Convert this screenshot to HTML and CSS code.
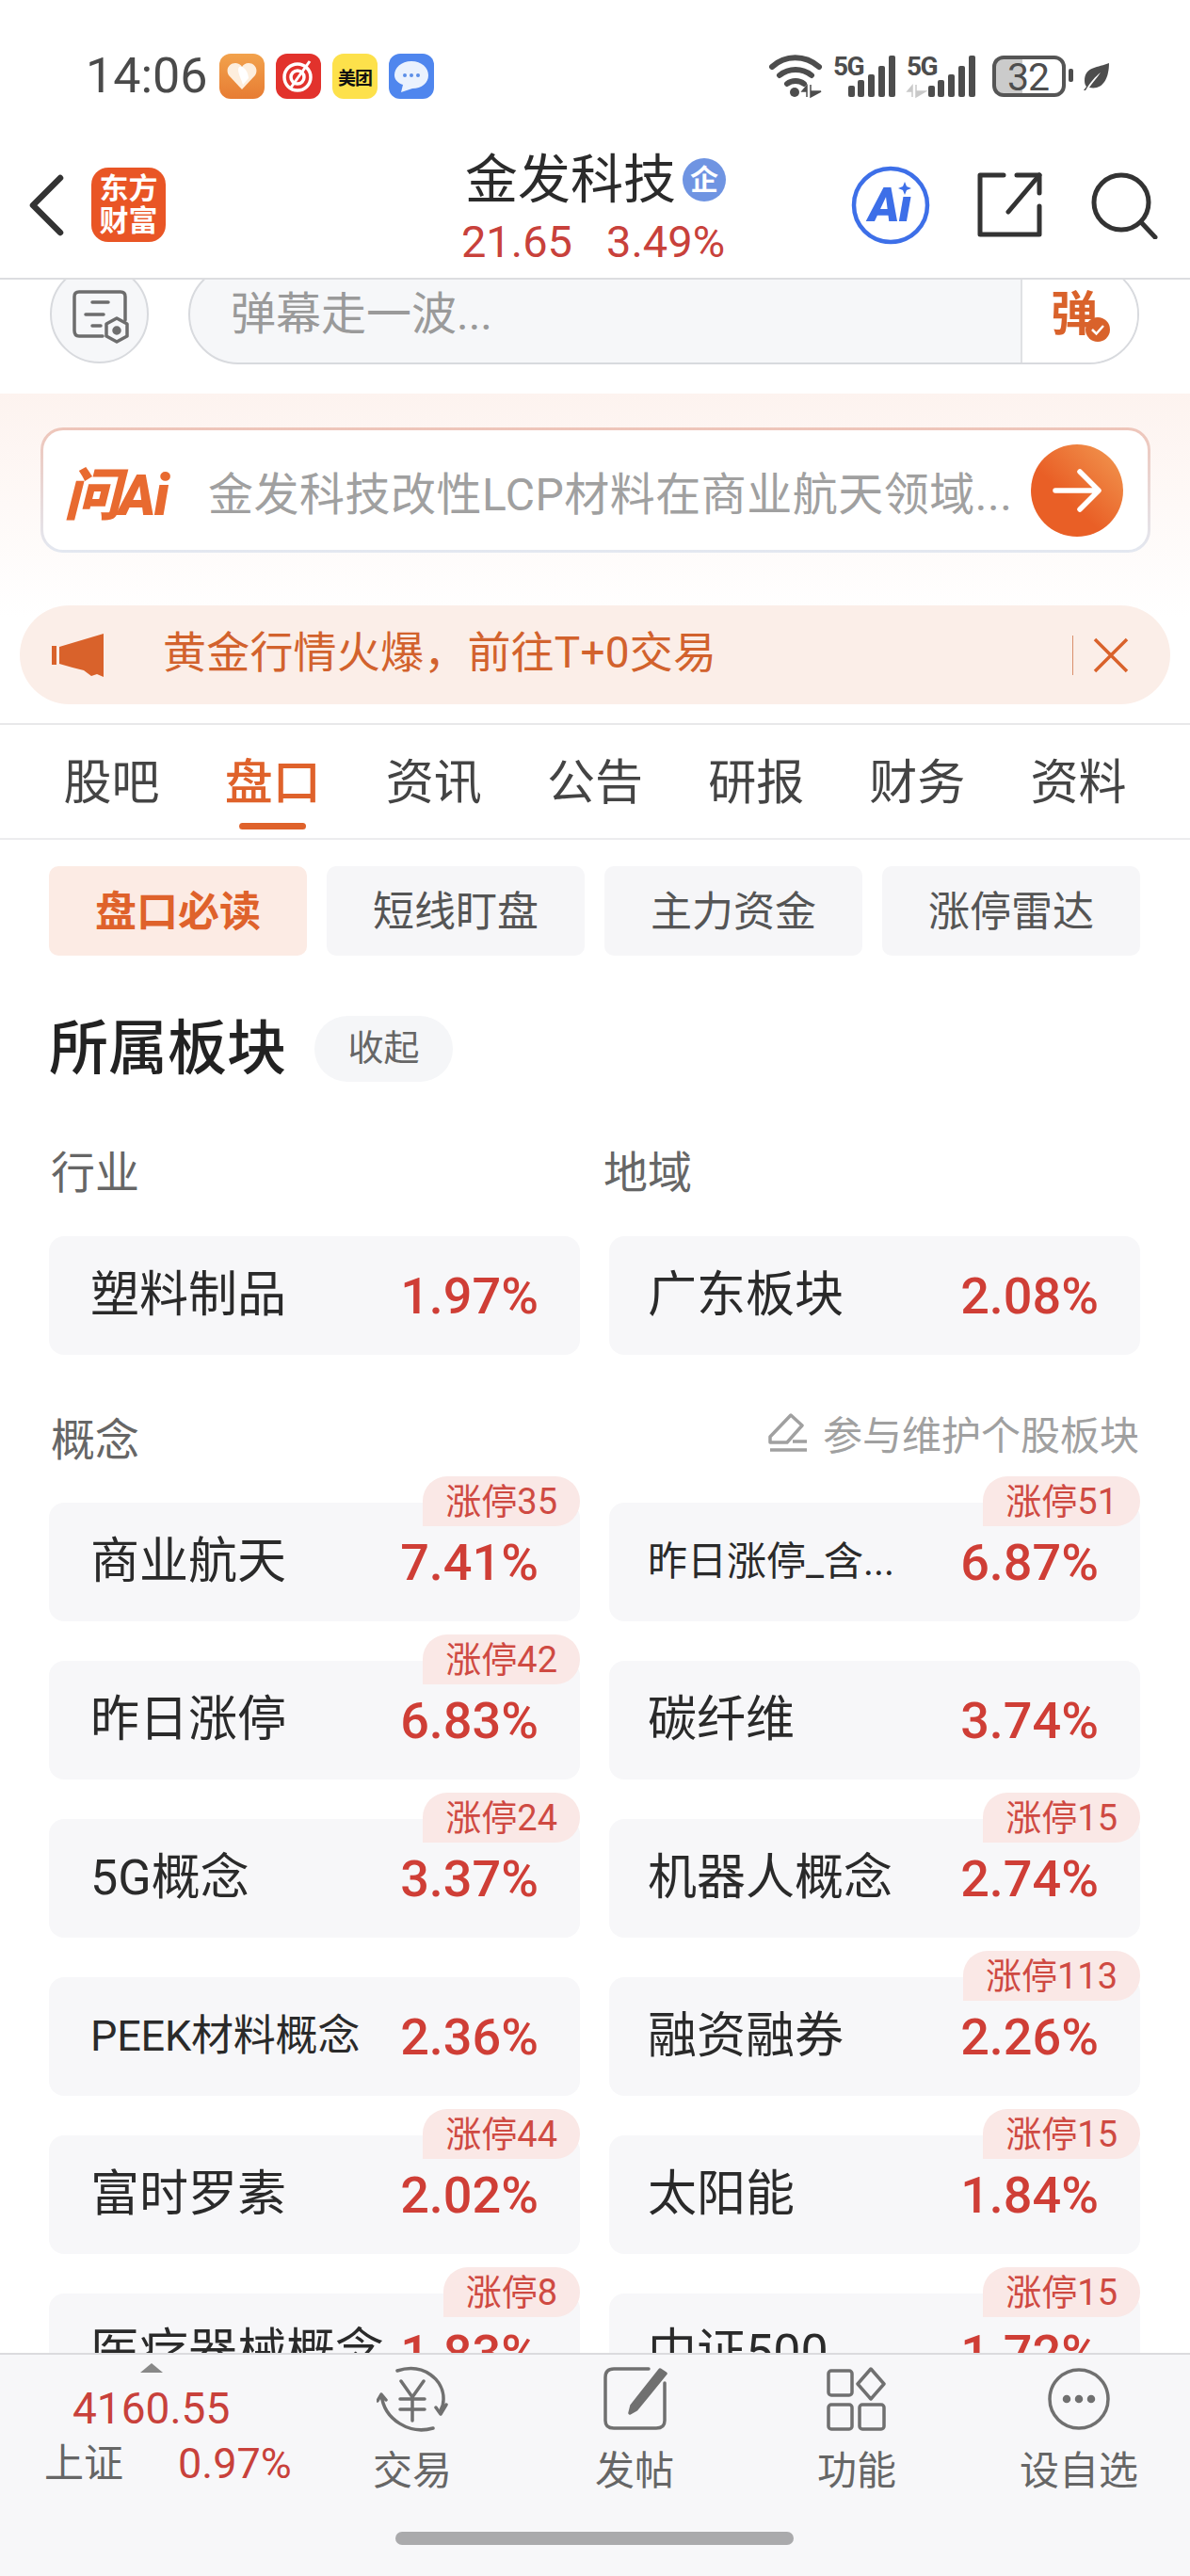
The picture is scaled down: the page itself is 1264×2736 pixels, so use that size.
FILE: index.html
```html
<!DOCTYPE html>
<html lang="zh-CN">
<head>
  <meta charset="UTF-8">
  <meta name="viewport" content="width=device-width, initial-scale=1.0">
  <title>金发科技 盘口</title>
  <link rel="stylesheet" href="styles.css">
</head>
<body>
  <div class="status-bar">
    <div class="status-left">
      <span class="clock">14:06</span>
      <span class="app-icon app-health">
        <svg viewBox="0 0 48 48" width="48" height="48"><path d="M24 38 L10 23 C6 16 11 10 17 10 C20 10 23 12 24 14 C25 12 28 10 31 10 C37 10 42 16 38 23 Z" fill="#fdeedd"/><path d="M21 14 C26 12 31 20 31 26 L25 33 C23 26 18 18 21 14 Z" fill="#fff"/></svg>
      </span>
      <span class="app-icon app-red">
        <svg viewBox="0 0 48 48" width="48" height="48" fill="none" stroke="#fff" stroke-width="3.5"><circle cx="23" cy="25" r="14"/><circle cx="23" cy="25" r="7"/><path d="M36 8 L16 36" stroke-width="3"/></svg>
      </span>
      <span class="app-icon app-meituan">美团</span>
      <span class="app-icon app-msg">
        <svg viewBox="0 0 48 48" width="48" height="48"><path d="M24 8 C35 8 42 15 42 23 C42 31 35 37 25 37 L13 41 L15 33 C9 31 6 27 6 23 C6 15 13 8 24 8 Z" fill="#eaf2fe"/><circle cx="17" cy="23" r="2" fill="#5b8fe8"/><circle cx="24" cy="23" r="2" fill="#5b8fe8"/><circle cx="31" cy="23" r="2" fill="#5b8fe8"/></svg>
      </span>
    </div>
    <svg class="status-right" viewBox="818 36 362 80" width="362" height="80">
      <g fill="none" stroke="#4d4d4d" stroke-width="6" stroke-linecap="round">
        <path d="M821 71 C835 58 856 58 871 71"/>
        <path d="M829 80 C839 72 853 72 863 80"/>
        <path d="M837 89 C842 85 850 85 855 89"/>
      </g>
      <circle cx="845" cy="98" r="5" fill="#4d4d4d"/>
      <path d="M858 103 V91 L853 97 H858 M862 90 V103 L873 97 H862" fill="#4d4d4d" stroke="#4d4d4d" stroke-width="1.5"/>
      <text x="886" y="80" class="sig-text">5G</text>
      <g fill="#4d4d4d">
        <rect x="902" y="91" width="7" height="12" rx="2"/>
        <rect x="912" y="85" width="7" height="18" rx="2"/>
        <rect x="923" y="79" width="7" height="24" rx="2"/>
        <rect x="934" y="70" width="7" height="33" rx="2"/>
        <rect x="945" y="59" width="7" height="44" rx="2"/>
      </g>
      <text x="964" y="80" class="sig-text">5G</text>
      <path d="M970 103 V91 L965 97 H970 M974 90 V103 L984 97 H974" fill="#c9c9c9" stroke="#c9c9c9" stroke-width="1.5"/>
      <g fill="#4d4d4d">
        <rect x="987" y="91" width="7" height="12" rx="2"/>
        <rect x="997" y="85" width="7" height="18" rx="2"/>
        <rect x="1008" y="79" width="7" height="24" rx="2"/>
        <rect x="1019" y="70" width="7" height="33" rx="2"/>
        <rect x="1030" y="59" width="7" height="44" rx="2"/>
      </g>
      <path d="M1060 62 H1087 V100 H1060 Q1057 100 1057 97 V65 Q1057 62 1060 62 Z" fill="#cbcbcb"/>
      <rect x="1057" y="61" width="74" height="40" rx="10" fill="none" stroke="#555" stroke-width="4"/>
      <text x="1093" y="96" class="batt-text" text-anchor="middle">32</text>
      <rect x="1136" y="73" width="5" height="14" rx="2" fill="#4d4d4d"/>
      <path d="M1179 67 C1168 72 1153 70 1153 86 C1153 89 1154 91 1155 92 L1152 96 L1154 96 C1160 86 1164 82 1170 77 C1166 83 1162 87 1158 93 C1172 96 1179 84 1179 67 Z" fill="#4d4d4d"/>
    </svg>
  </div>

  <header class="top-nav">
    <div class="nav-left">
      <svg viewBox="0 0 40 66" width="40" height="66" fill="none" stroke="#333" stroke-width="6.5" stroke-linecap="round" stroke-linejoin="round"><path d="M34 4 L5 33 L34 62"/></svg>
      <div class="logo">东方<br>财富</div>
    </div>
    <div class="nav-title">
      <div class="stock-name">金发科技<span class="qi">企</span></div>
      <div class="stock-price"><span>21.65</span><span>3.49%</span></div>
    </div>
    <div class="nav-right">
      <svg viewBox="0 0 84 84" width="84" height="84"><circle cx="42" cy="42" r="39" fill="none" stroke="#3d6fe8" stroke-width="4.5"/><text x="41" y="59" class="ai-text" text-anchor="middle">Aı</text><path d="M57 17 L59 22 L64 24 L59 26 L57 31 L55 26 L50 24 L55 22 Z" fill="#3d6fe8"/></svg>
      <svg viewBox="0 0 70 70" width="70" height="70" fill="none" stroke="#333" stroke-width="5" stroke-linecap="round" stroke-linejoin="round"><path d="M28 3 H3 V66 H66 V36"/><path d="M66 3 H42 M66 3 V22"/><path d="M66 3 L33 42"/></svg>
      <svg viewBox="0 0 72 72" width="72" height="72" fill="none" stroke="#333" stroke-width="5" stroke-linecap="round"><circle cx="33" cy="33" r="29"/><path d="M54 54 L69 70"/></svg>
    </div>
  </header>

  <main class="content">
    <div class="danmu-row">
      <div class="danmu-setting">
        <svg viewBox="0 0 66 60" width="66" height="60" fill="none" stroke="#6d6d6d" stroke-width="3.5" stroke-linecap="round" stroke-linejoin="round"><path d="M57 33 V8 Q57 3 52 3 H8 Q3 3 3 8 V44 Q3 50 8 50 H33"/><path d="M22 14 H39 M15 27 H34 M22 39 H31"/><path d="M48 31 L59 37 V50 L48 56 L37 50 V37 Z"/><circle cx="48" cy="44" r="3" fill="#6d6d6d"/></svg>
      </div>
      <div class="danmu-input">
        <span class="danmu-hint">弹幕走一波...</span>
        <span class="danmu-send">弹
          <svg class="danmu-check" viewBox="0 0 28 28" width="28" height="28"><circle cx="14" cy="14" r="13" fill="#d9622b"/><path d="M8 14 L12.500 18.500 L20 10" fill="none" stroke="#fff" stroke-width="2.500"/></svg>
        </span>
      </div>
    </div>

    <section class="promo">
      <div class="ask-card">
        <span class="ask-logo">问Ai</span>
        <span class="ask-text">金发科技改性LCP材料在商业航天领域...</span>
        <span class="ask-go">
          <svg viewBox="0 0 98 98" width="98" height="98" fill="none" stroke="#fff" stroke-width="5.5" stroke-linecap="round" stroke-linejoin="round"><path d="M26 49 H70 M52 29 L72 49 L52 69"/></svg>
        </span>
      </div>
      <div class="notice">
        <svg viewBox="0 0 56 46" width="56" height="46" fill="#d9622b"><rect x="0" y="13" width="5" height="20"/><path d="M8 14 L55 0 V46 L48 43 L42 45 L34 39 L22 36 L8 32 Z"/></svg>
        <span class="notice-text">黄金行情火爆，前往T+0交易</span>
        <span class="notice-sep"></span>
        <svg viewBox="0 0 38 38" width="38" height="38" fill="none" stroke="#d9622b" stroke-width="3.500"><path d="M2 2 L36 36 M36 2 L2 36"/></svg>
      </div>
    </section>

    <nav class="tabs">
      <div class="tab">股吧</div>
      <div class="tab active">盘口</div>
      <div class="tab">资讯</div>
      <div class="tab">公告</div>
      <div class="tab">研报</div>
      <div class="tab">财务</div>
      <div class="tab">资料</div>
    </nav>

    <div class="sub-tabs">
      <div class="sub-tab active">盘口必读</div>
      <div class="sub-tab">短线盯盘</div>
      <div class="sub-tab">主力资金</div>
      <div class="sub-tab">涨停雷达</div>
    </div>

    <div class="section-head">
      <h2>所属板块</h2>
      <span class="collapse">收起</span>
    </div>

    <div class="label-row">
      <span class="label">行业</span>
      <span class="label label-region">地域</span>
    </div>
    <div class="board-grid">
      <div class="board"><span class="board-name">塑料制品</span><span class="board-pct">1.97%</span></div>
      <div class="board"><span class="board-name">广东板块</span><span class="board-pct">2.08%</span></div>
    </div>

    <div class="label-row concept-head">
      <span class="label">概念</span>
      <span class="maintain">
        <svg viewBox="0 0 42 42" width="42" height="42" fill="none" stroke="#a0a0a0" stroke-width="3.500" stroke-linejoin="round"><path d="M2 26 L24 3 L36 14 L20 32 H2 Z"/><path d="M2 40 H41 M26 31 H41"/></svg>
        参与维护个股板块
      </span>
    </div>
    <div class="board-grid concept-grid">
      <div class="board"><span class="tag">涨停35</span><span class="board-name">商业航天</span><span class="board-pct">7.41%</span></div>
      <div class="board"><span class="tag">涨停51</span><span class="board-name small">昨日涨停_含...</span><span class="board-pct">6.87%</span></div>
      <div class="board"><span class="tag">涨停42</span><span class="board-name">昨日涨停</span><span class="board-pct">6.83%</span></div>
      <div class="board"><span class="board-name">碳纤维</span><span class="board-pct">3.74%</span></div>
      <div class="board"><span class="tag">涨停24</span><span class="board-name">5G概念</span><span class="board-pct">3.37%</span></div>
      <div class="board"><span class="tag">涨停15</span><span class="board-name">机器人概念</span><span class="board-pct">2.74%</span></div>
      <div class="board"><span class="board-name peek">PEEK材料概念</span><span class="board-pct">2.36%</span></div>
      <div class="board"><span class="tag">涨停113</span><span class="board-name">融资融券</span><span class="board-pct">2.26%</span></div>
      <div class="board"><span class="tag">涨停44</span><span class="board-name">富时罗素</span><span class="board-pct">2.02%</span></div>
      <div class="board"><span class="tag">涨停15</span><span class="board-name">太阳能</span><span class="board-pct">1.84%</span></div>
      <div class="board"><span class="tag">涨停8</span><span class="board-name">医疗器械概念</span><span class="board-pct">1.83%</span></div>
      <div class="board"><span class="tag">涨停15</span><span class="board-name">中证500</span><span class="board-pct">1.72%</span></div>
    </div>
  </main>

  <footer class="bottom-bar">
    <div class="bottom-row">
      <div class="index-box">
        <span class="index-arrow"></span>
        <div class="index-value">4160.55</div>
        <div class="index-line"><span class="index-name">上证</span><span class="index-pct">0.97%</span></div>
      </div>
      <div class="bottom-item">
        <svg viewBox="0 0 76 70" width="76" height="70" fill="none" stroke="#707070" stroke-width="3.500" stroke-linecap="round" stroke-linejoin="round"><path d="M22 5 C50 -4 72 15 71 36 C71 40 70 44 68 47"/><path d="M60 66 C36 73 8 58 5 30 L1 37 M5 30 L10 36"/><path d="M74 41 L68 51 L63 44"/><path d="M26 16 L38 33 L50 16 M25 35 H51 M25 46 H51 M38 33 V58"/></svg>
        <span>交易</span>
      </div>
      <div class="bottom-item">
        <svg viewBox="0 0 70 70" width="70" height="70" fill="none" stroke="#707070" stroke-width="3.500" stroke-linecap="round" stroke-linejoin="round"><path d="M50 3 H13 Q4 3 4 12 V58 Q4 66 13 66 H58 Q67 66 67 58 V18"/><path d="M62 4 L68 8 L37 46 L30 50 L32 42 Z" fill="#707070"/></svg>
        <span>发帖</span>
      </div>
      <div class="bottom-item">
        <svg viewBox="0 0 66 70" width="66" height="70" fill="none" stroke="#707070" stroke-width="3.500" stroke-linejoin="round"><rect x="3" y="5" width="25" height="26" rx="3"/><path d="M48 3 L62 19 L48 35 L34 19 Z"/><rect x="3" y="41" width="25" height="26" rx="3"/><rect x="36" y="41" width="26" height="26" rx="3"/></svg>
        <span>功能</span>
      </div>
      <div class="bottom-item">
        <svg viewBox="0 0 70 70" width="70" height="70" fill="none" stroke="#707070" stroke-width="3.500"><circle cx="35" cy="35" r="31"/><circle cx="22" cy="35" r="2.500" fill="#707070"/><circle cx="35" cy="35" r="2.500" fill="#707070"/><circle cx="48" cy="35" r="2.500" fill="#707070"/></svg>
        <span>设自选</span>
      </div>
    </div>
    <div class="home-bar"></div>
  </footer>
</body>
</html>
```

FILE: styles.css
```css
* {
  box-sizing: border-box;
}
html, body {
  margin: 0;
  padding: 0;
}
body {
  width: 1264px;
  height: 2736px;
  display: flex;
  flex-direction: column;
  overflow: hidden;
  background: #fff;
  color: #222;
  font-family: Roboto, "Noto Sans CJK SC", sans-serif;
}

/* status bar */
.status-bar {
  height: 130px;
  flex: none;
  display: flex;
  align-items: flex-start;
  justify-content: space-between;
  padding: 56px 85px 0 91px;
}
.status-left {
  display: flex;
  align-items: center;
  gap: 12px;
}
.status-right {
  margin-top: -20px;
}
.clock {
  font-size: 52px;
  line-height: 50px;
  color: #4a4a4a;
  width: 130px;
}
.app-icon {
  width: 48px;
  height: 48px;
  border-radius: 12px;
  overflow: hidden;
  display: flex;
  align-items: center;
  justify-content: center;
}
.app-health { background: linear-gradient(#f2a24c, #e77c33); }
.app-red { background: #e2322c; }
.app-meituan {
  background: #fde14b;
  color: #111;
  font-size: 19px;
  font-weight: 700;
  letter-spacing: -1px;
}
.app-msg { background: #4f86ee; }
.sig-text {
  font-family: Roboto, sans-serif;
  font-size: 28px;
  font-weight: 700;
  fill: #4d4d4d;
  letter-spacing: -1.500px;
}
.batt-text {
  font-family: Roboto, sans-serif;
  font-size: 41px;
  fill: #4d4d4d;
  letter-spacing: -1px;
}

/* top nav */
.top-nav {
  height: 167px;
  flex: none;
  display: grid;
  grid-template-columns: 1fr auto 1fr;
  border-bottom: 2px solid #dcdde0;
  padding: 0 34px 0 30px;
  position: relative;
  z-index: 2;
  background: #fff;
}
.nav-left {
  display: flex;
  align-items: center;
  gap: 27px;
  padding-top: 10px;
}
.logo {
  width: 79px;
  height: 79px;
  border-radius: 18px;
  background: #e95525;
  color: #fff;
  font-size: 31px;
  line-height: 34px;
  font-weight: 700;
  text-align: center;
  padding-top: 6px;
}
.nav-title {
  text-align: center;
}
.stock-name {
  font-size: 56px;
  line-height: 64px;
  margin-top: 29px;
  display: flex;
  align-items: center;
  color: #2b2b2b;
  margin-left: 5px;
}
.qi {
  width: 46px;
  height: 46px;
  margin-left: 7px;
  border-radius: 50%;
  background: #6f94e2;
  color: #fff;
  font-size: 30px;
  line-height: 46px;
  font-weight: 700;
  text-align: center;
}
.stock-price {
  display: flex;
  justify-content: center;
  gap: 36px;
  font-size: 47px;
  line-height: 56px;
  color: #c8413b;
  margin-top: 6px;
}
.nav-right {
  display: flex;
  align-items: center;
  justify-content: flex-end;
  gap: 50px;
  padding-top: 10px;
}
.ai-text {
  font-family: Roboto, sans-serif;
  font-size: 50px;
  font-style: italic;
  font-weight: 900;
  fill: #3d6fe8;
  letter-spacing: -1px;
}

/* scrolling part */
.content {
  flex: 1;
  min-height: 0;
  overflow: hidden;
}
.danmu-row {
  display: flex;
  gap: 42px;
  padding: 0 54px 0 53px;
  margin-top: -16px;
  height: 107px;
}
.danmu-setting {
  width: 105px;
  height: 105px;
  flex: none;
  border-radius: 50%;
  background: #f6f7f9;
  border: 2px solid #d8dade;
  display: flex;
  align-items: center;
  justify-content: center;
  padding: 6px 0 0 6px;
}
.danmu-input {
  flex: 1;
  height: 106px;
  border-radius: 53px;
  background: #f6f7f9;
  border: 2px solid #d8dade;
  display: flex;
  align-items: center;
  justify-content: space-between;
  padding-left: 43px;
}
.danmu-hint {
  font-size: 48px;
  line-height: 58px;
  color: #9a9a9a;
}
.danmu-send {
  width: 124px;
  height: 100%;
  border-left: 2px solid #e0e1e4;
  background: #fff;
  border-radius: 0 53px 53px 0;
  color: #d9622b;
  font-size: 50px;
  font-weight: 700;
  line-height: 102px;
  padding-left: 30px;
  position: relative;
}
.danmu-check {
  position: absolute;
  left: 66px;
  top: 53px;
}

/* ask ai + notice */
.promo {
  margin-top: 30px;
  padding: 36px 21px 20px;
  background: linear-gradient(#fdf3ef, #fff 68%);
  border-bottom: 2px solid #e8e8ea;
}
.ask-card {
  height: 133px;
  margin: 0 21px 0 22px;
  border: 3px solid transparent;
  border-radius: 24px;
  background: linear-gradient(#fff, #fff) padding-box, linear-gradient(#eec5b9, #e3e8f1) border-box;
  display: flex;
  align-items: center;
  padding: 0 26px;
}
.ask-logo {
  font-size: 60px;
  font-style: italic;
  font-weight: 900;
  color: #e86a30;
  width: 153px;
  margin-left: -4px;
  letter-spacing: -2px;
  flex: none;
}
.ask-text {
  flex: 1;
  font-size: 48px;
  color: #a0a0a0;
  white-space: nowrap;
  overflow: hidden;
  letter-spacing: 0.500px;
}
.ask-go {
  width: 98px;
  height: 98px;
  flex: none;
  border-radius: 50%;
  background: linear-gradient(225deg, #f29a52, #e95f26 60%);
  margin-left: 14px;
}
.notice {
  height: 105px;
  margin-top: 56px;
  border-radius: 53px;
  background: #fbeee8;
  display: flex;
  align-items: center;
  padding: 0 44px 0 34px;
}
.notice-text {
  flex: 1;
  margin-left: 62px;
  font-size: 46px;
  line-height: 60px;
  padding-bottom: 6px;
  color: #d2622d;
  letter-spacing: 0.200px;
}
.notice-sep {
  width: 1px;
  height: 42px;
  background: #d98f6c;
  margin-right: 21px;
}

/* tabs */
.tabs {
  display: flex;
  height: 122px;
  padding: 0 33px;
  border-bottom: 2px solid #ececee;
}
.tab {
  flex: 1;
  position: relative;
  text-align: center;
  font-size: 51px;
  line-height: 124px;
  color: #444;
}
.tab.active {
  color: #df622b;
  font-weight: 500;
}
.tab.active::after {
  content: "";
  position: absolute;
  left: 50px;
  right: 50px;
  bottom: 9px;
  height: 7px;
  border-radius: 4px;
  background: #df622b;
}
.sub-tabs {
  display: flex;
  gap: 21px;
  padding: 28px 52px 0;
}
.sub-tab {
  width: 274px;
  height: 95px;
  border-radius: 10px;
  background: #f6f6f8;
  color: #555;
  font-size: 44px;
  line-height: 99px;
  text-align: center;
}
.sub-tab.active {
  background: #fcebe4;
  color: #df622b;
  font-weight: 700;
}

/* boards */
.section-head {
  display: flex;
  align-items: center;
  gap: 30px;
  padding: 64px 52px 0;
}
.section-head h2 {
  margin: 0;
  font-size: 63px;
  line-height: 70px;
  font-weight: 500;
  color: #222;
}
.collapse {
  width: 147px;
  height: 70px;
  border-radius: 35px;
  background: #f5f6f8;
  color: #666;
  font-size: 38px;
  line-height: 68px;
  text-align: center;
}
.label-row {
  display: flex;
  padding: 65px 52px 0 54px;
}
.label {
  font-size: 47px;
  line-height: 64px;
  color: #666;
}
.label-region {
  margin-left: 493px;
}
.board-grid {
  display: grid;
  grid-template-columns: 564px 564px;
  gap: 42px 31px;
  padding: 35px 52px 0;
}
.board {
  position: relative;
  height: 126px;
  border-radius: 16px;
  background: #f7f7f9;
  display: flex;
  align-items: center;
  justify-content: space-between;
  padding: 0 44px;
}
.board:nth-child(even) {
  padding-left: 41px;
}
.board-name {
  font-size: 52px;
  line-height: 70px;
  color: #2a2a2a;
  white-space: nowrap;
}
.board-name.small {
  font-size: 42px;
}
.board-name.peek {
  font-size: 45px;
  letter-spacing: -0.2px;
}
.board-pct {
  font-size: 54px;
  font-weight: 500;
  color: #cf3e36;
}
.tag {
  position: absolute;
  right: 0;
  top: -28px;
  height: 53px;
  padding: 0 24px;
  border-radius: 26px 26px 26px 0;
  background: #fae8e6;
  color: #cf4a42;
  font-size: 38px;
  line-height: 55px;
}
.concept-head {
  padding-top: 59px;
  justify-content: space-between;
  align-items: center;
}
.maintain {
  display: flex;
  align-items: center;
  gap: 16px;
  font-size: 42px;
  color: #a0a0a0;
  margin-right: 2px;
  margin-top: -18px;
}
.concept-grid {
  padding-top: 34px;
}

/* bottom bar */
.bottom-bar {
  height: 237px;
  flex: none;
  background: #f7f7f9;
  border-top: 2px solid #dbdbde;
}
.bottom-row {
  display: flex;
}
.index-box {
  width: 320px;
  flex: none;
  position: relative;
  padding: 32px 0 0 38px;
}
.index-arrow {
  position: absolute;
  left: 149px;
  top: 9px;
  border-left: 12px solid transparent;
  border-right: 12px solid transparent;
  border-bottom: 10px solid #888;
}
.index-value {
  font-size: 46px;
  line-height: 50px;
  color: #c8413b;
  margin-left: 39px;
}
.index-line {
  display: flex;
  align-items: center;
  margin-top: 8px;
  margin-left: 9px;
}
.index-name {
  font-size: 42px;
  line-height: 52px;
  color: #666;
}
.index-pct {
  font-size: 45px;
  line-height: 52px;
  color: #c8413b;
  margin-left: 58px;
}
.bottom-item {
  width: 236px;
  flex: none;
  display: flex;
  flex-direction: column;
  align-items: center;
  gap: 16px;
  padding-top: 12px;
  font-size: 42px;
  line-height: 52px;
  color: #666;
}
.home-bar {
  width: 423px;
  height: 14px;
  border-radius: 7px;
  background: #aaaaac;
  margin: 38px 0 0 420px;
}
```
